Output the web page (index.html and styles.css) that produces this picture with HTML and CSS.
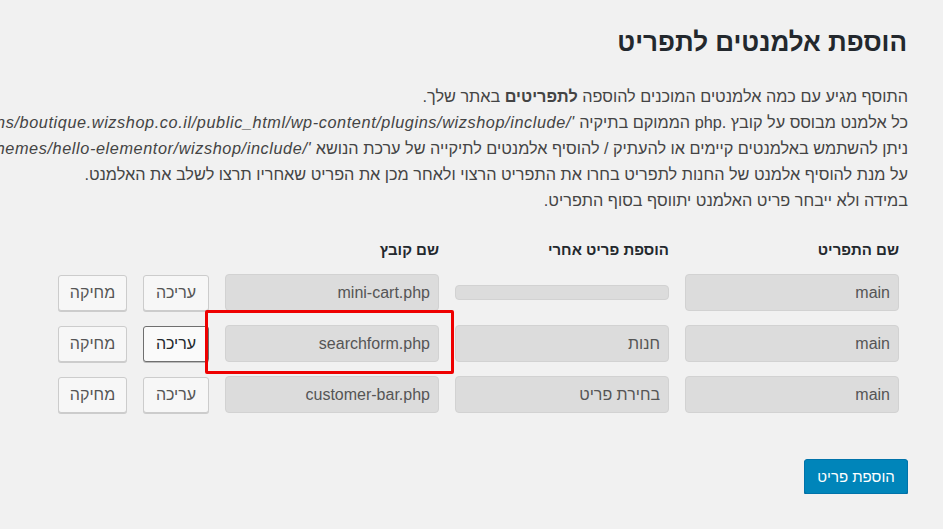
FILE: index.html
```html
<!DOCTYPE html>
<html lang="he" dir="rtl">
<head>
<meta charset="utf-8">
<title>הוספת אלמנטים לתפריט</title>
<link rel="stylesheet" href="styles.css">
</head>
<body>
<div class="wrap">
  <h1 class="title">הוספת אלמנטים לתפריט</h1>
  <div class="intro">
    <div class="line">התוסף מגיע עם כמה אלמנטים המוכנים להוספה <b>לתפריטים</b> באתר שלך.</div>
    <div class="line">כל אלמנט מבוסס על קובץ .php הממוקם בתיקיה <i class="path">'/home/wizshop/domains/boutique.wizshop.co.il/public_html/wp-content/plugins/wizshop/include/'</i></div>
    <div class="line">ניתן להשתמש באלמנטים קיימים או להעתיק / להוסיף אלמנטים לתיקייה של ערכת הנושא <i class="path">'/home/wizshop/domains/boutique.wizshop.co.il/public_html/wp-content/themes/hello-elementor/wizshop/include/'</i></div>
    <div class="line">על מנת להוסיף אלמנט של החנות לתפריט בחרו את התפריט הרצוי ולאחר מכן את הפריט שאחריו תרצו לשלב את האלמנט.</div>
    <div class="line">במידה ולא ייבחר פריט האלמנט יתווסף בסוף התפריט.</div>
  </div>

  <div class="grid">
    <div class="th">שם התפריט</div>
    <div class="th">הוספת פריט אחרי</div>
    <div class="th">שם קובץ</div>
    <div class="th"></div>
    <div class="th"></div>

    <div class="field">main</div>
    <div class="select-empty"></div>
    <div class="field">mini-cart.php</div>
    <button class="btn">עריכה</button>
    <button class="btn btn-wide">מחיקה</button>

    <div class="field">main</div>
    <div class="field">חנות</div>
    <div class="field">searchform.php</div>
    <button class="btn btn-focus">עריכה</button>
    <button class="btn btn-wide">מחיקה</button>

    <div class="field">main</div>
    <div class="field">בחירת פריט</div>
    <div class="field">customer-bar.php</div>
    <button class="btn">עריכה</button>
    <button class="btn btn-wide">מחיקה</button>

    <div class="highlight"></div>
  </div>

  <div class="actions">
    <button class="btn-primary">הוספת פריט</button>
  </div>
</div>
</body>
</html>
```

FILE: styles.css
```css
html, body {
  margin: 0;
  padding: 0;
}
body {
  background: #f1f1f1;
  color: #444;
  font-family: "Liberation Sans", Arial, sans-serif;
  font-size: 16px;
  overflow: hidden;
}
.wrap {
  padding: 25px 35px 0 0;
}
.title {
  margin: 0;
  font-size: 26px;
  line-height: 34px;
  font-weight: bold;
  color: #23282d;
  padding-right: 1px;
}
.intro {
  margin-top: 24px;
  line-height: 26px;
  font-size: 16.25px;
}
.line {
  white-space: nowrap;
}
.intro b {
  font-weight: bold;
}
.path {
  letter-spacing: 0.6px;
}
.grid {
  position: relative;
  display: grid;
  grid-template-columns: 214px 214px 214px 66px 69px;
  grid-template-rows: 20px 37px 37px 37px;
  column-gap: 16px;
  row-gap: 14px;
  align-items: center;
  width: max-content;
  margin: 27px 9px 0 0;
}
.th {
  font-weight: bold;
  font-size: 15px;
  color: #23282d;
  line-height: 20px;
}
.field {
  box-sizing: border-box;
  height: 37px;
  background: #dcdcdc;
  border: 1px solid #d2d2d2;
  border-radius: 4px;
  color: #555;
  padding: 0 8px;
  line-height: 35px;
  font-size: 16px;
}
.select-empty {
  height: 15px;
  background: #dcdcdc;
  border: 1px solid #d2d2d2;
  border-radius: 4px;
  box-sizing: border-box;
}
.btn {
  box-sizing: border-box;
  height: 36px;
  background: #f7f7f7;
  border: 1px solid #cccccc;
  border-radius: 3px;
  box-shadow: 0 1px 0 #cccccc;
  color: #555;
  font-family: "Liberation Sans", Arial, sans-serif;
  font-size: 16px;
  padding: 0;
  cursor: pointer;
}
.btn-focus {
  background: #fafafa;
  border-color: #6f6f6f;
  box-shadow: 0 1px 0 #bbb;
  color: #23282d;
}
.highlight {
  position: absolute;
  left: 147px;
  top: 70px;
  width: 249px;
  height: 64px;
  box-sizing: border-box;
  border: 3px solid #ee0000;
  border-radius: 2px;
  pointer-events: none;
}
.actions {
  margin-top: 46px;
}
.btn-primary {
  box-sizing: border-box;
  width: 104px;
  height: 35px;
  background: #0085ba;
  border: 1px solid #0073aa;
  border-radius: 3px;
  box-shadow: 0 1px 0 #006799;
  color: #fff;
  font-family: "Liberation Sans", Arial, sans-serif;
  font-size: 15px;
  padding: 0;
  cursor: pointer;
}
```
